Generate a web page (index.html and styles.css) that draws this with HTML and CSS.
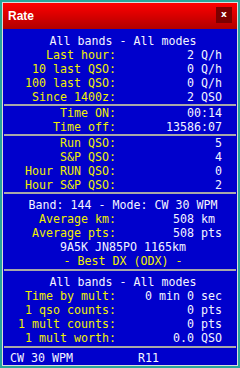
FILE: index.html
```html
<!DOCTYPE html>
<html lang="en">
<head>
    <meta charset="UTF-8">
    <title>Rate</title>
    <link rel="stylesheet" href="styles.css">
</head>
<body>
    <div class="window">
        <div class="titlebar">
            <span class="title">Rate</span>
            <span class="close">x</span>
        </div>
        <div class="client">
            <div class="panel first">
                <div class="center">All bands - All modes</div>
                <div class="row"><span class="lbl">Last hour:</span><span class="val">2 Q/h</span></div>
                <div class="row"><span class="lbl">10 last QSO:</span><span class="val">0 Q/h</span></div>
                <div class="row"><span class="lbl">100 last QSO:</span><span class="val">0 Q/h</span></div>
                <div class="row"><span class="lbl">Since 1400z:</span><span class="val">2 QSO</span></div>
            </div>
            <div class="panel">
                <div class="row"><span class="lbl">Time ON:</span><span class="val">00:14</span></div>
                <div class="row"><span class="lbl">Time off:</span><span class="val">13586:07</span></div>
            </div>
            <div class="panel">
                <div class="row"><span class="lbl">Run QSO:</span><span class="val">5</span></div>
                <div class="row"><span class="lbl">S&amp;P QSO:</span><span class="val">4</span></div>
                <div class="row"><span class="lbl">Hour RUN QSO:</span><span class="val">0</span></div>
                <div class="row"><span class="lbl">Hour S&amp;P QSO:</span><span class="val">2</span></div>
            </div>
            <div class="panel padded">
                <div class="center">Band: 144 - Mode: CW 30 WPM</div>
                <div class="row"><span class="lbl">Average km:</span><span class="val">508 km </span></div>
                <div class="row"><span class="lbl">Average pts:</span><span class="val">508 pts</span></div>
                <div class="center">9A5K JN85PO 1165km</div>
                <div class="center yellow">- Best DX (ODX) -</div>
            </div>
            <div class="panel padded">
                <div class="center">All bands - All modes</div>
                <div class="row"><span class="lbl">Time by mult:</span><span class="val">0 min 0 sec</span></div>
                <div class="row"><span class="lbl">1 qso counts:</span><span class="val">0 pts</span></div>
                <div class="row"><span class="lbl">1 mult counts:</span><span class="val">0 pts</span></div>
                <div class="row"><span class="lbl">1 mult worth:</span><span class="val">0.0 QSO</span></div>
            </div>
            <div class="panel status">
                <span class="mode">CW 30 WPM</span>
                <span>R11</span>
            </div>
        </div>
    </div>
</body>
</html>
```

FILE: styles.css
```css
body {
    margin: 0;
    background: #29a69b;
    width: 240px;
    height: 368px;
    overflow: hidden;
}
.window {
    margin: 2px 0 0 2px;
    width: 234px;
    height: 362px;
    border: 1px solid #dcdcdc;
    display: flex;
    flex-direction: column;
    background: #0000cc;
}
.titlebar {
    height: 26px;
    background: linear-gradient(to bottom, #ff0000, #b00000);
    display: flex;
    align-items: center;
    justify-content: space-between;
    padding: 0 5px 0 5px;
}
.title {
    font-family: "Liberation Sans", Arial, sans-serif;
    font-weight: bold;
    font-size: 12px;
    color: white;
    margin-top: -1px;
}
.close {
    width: 16px;
    height: 16px;
    background: #7c0000;
    color: white;
    font-family: "DejaVu Sans", sans-serif;
    font-weight: bold;
    font-size: 9px;
    line-height: 14px;
    text-align: center;
    margin-top: -2px;
}
.client {
    flex: 1;
    display: flex;
    flex-direction: column;
    padding: 0 1px;
    font-family: "DejaVu Sans Mono", monospace;
    font-size: 11.63px;
    line-height: 14px;
    color: #f4f4ff;
}
.center, .lbl, .val, .status span {
    white-space: pre;
}
.panel {
    border-top: 2px solid #a8a8a8;
}
.panel.first {
    border-top: none;
    padding-top: 5px;
}
.panel.padded {
    padding: 4px 0 1px;
}
.center {
    text-align: center;
    padding-left: 6px;
}
.yellow, .lbl {
    color: #f0f000;
}
.row {
    display: grid;
    grid-template-columns: 112px 106px;
}
.lbl, .val {
    text-align: right;
}
.status {
    flex: 1;
    display: flex;
    padding: 3px 0 0 6px;
}
.mode {
    width: 128px;
}
```
